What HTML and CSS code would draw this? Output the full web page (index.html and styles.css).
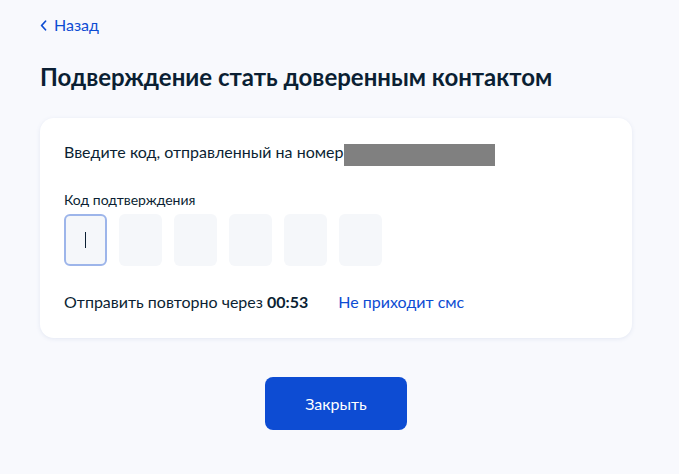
FILE: index.html
```html
<!DOCTYPE html>
<html lang="ru">
<head>
<meta charset="utf-8">
<title>Подверждение</title>
<link rel="stylesheet" href="styles.css">
</head>
<body>
<div class="page">
  <a class="back" href="#">
    <svg class="back-icon" width="7" height="11" viewBox="0 0 7 11"><path d="M5.5 1.2 L1.6 5.5 L5.5 9.8" fill="none" stroke="#0d4cd3" stroke-width="1.7" stroke-linecap="round" stroke-linejoin="round"/></svg>
    <span>Назад</span>
  </a>
  <h1 class="title">Подверждение стать доверенным контактом</h1>
  <div class="card">
    <div class="sent">
      <span>Введите код, отправленный на номер</span>
      <span class="masked"></span>
    </div>
    <div class="label">Код подтверждения</div>
    <div class="codes">
      <div class="code active"><span class="caret"></span></div>
      <div class="code"></div>
      <div class="code"></div>
      <div class="code"></div>
      <div class="code"></div>
      <div class="code"></div>
    </div>
    <div class="resend">
      <span>Отправить повторно через <b>00:53</b></span>
      <a class="link" href="#">Не приходит смс</a>
    </div>
  </div>
  <div class="actions">
    <button class="btn">Закрыть</button>
  </div>
</div>
</body>
</html>
```
FILE: styles.css
```css
* { box-sizing: border-box; }
html, body { margin: 0; padding: 0; }
body {
  background: #f8f9fd;
  font-family: Lato, "Noto Sans", sans-serif;
  color: #0b1f33;
}
.page {
  width: 592px;
  margin-left: 40px;
  padding-top: 13px;
}
.back {
  display: flex;
  align-items: center;
  gap: 7px;
  height: 24px;
  font-size: 16px;
  line-height: 24px;
  color: #0d4cd3;
  text-decoration: none;
}
.back-icon { display: block; }
.title {
  margin: 24px 0 0;
  font-size: 24px;
  line-height: 32px;
  font-weight: 700;
  color: #0b1f33;
}
.card {
  margin-top: 25px;
  background: #fff;
  border-radius: 14px;
  box-shadow: 0 1px 4px rgba(105, 130, 185, 0.14);
  padding: 22px 24px 25px;
  height: 220px;
}
.sent {
  display: flex;
  align-items: flex-start;
  font-size: 16px;
  line-height: 24px;
}
.masked {
  display: block;
  width: 151px;
  height: 22px;
  margin-top: 4px;
  margin-left: 1px;
  background: #808080;
}
.label {
  margin-top: 24px;
  font-size: 14px;
  line-height: 20px;
}
.codes {
  display: flex;
  gap: 12px;
  margin-top: 4px;
}
.code {
  width: 43px;
  height: 52px;
  background: #f5f7fa;
  border-radius: 6px;
  display: flex;
  align-items: center;
  justify-content: center;
}
.code.active {
  border: 2px solid #9db5ea;
}
.caret {
  display: block;
  width: 1.5px;
  height: 16px;
  background: #0b1f33;
}
.resend {
  margin-top: 24px;
  display: flex;
  gap: 30px;
  font-size: 16px;
  line-height: 24px;
}
.resend b { font-weight: 700; }
.link {
  color: #0d4cd3;
  text-decoration: none;
}
.actions {
  display: flex;
  justify-content: center;
  margin-top: 39px;
}
.btn {
  width: 142px;
  height: 53px;
  border: none;
  border-radius: 8px;
  background: #0d4cd3;
  color: #fff;
  font-family: Lato, "Noto Sans", sans-serif;
  font-size: 16px;
  cursor: pointer;
}
```
